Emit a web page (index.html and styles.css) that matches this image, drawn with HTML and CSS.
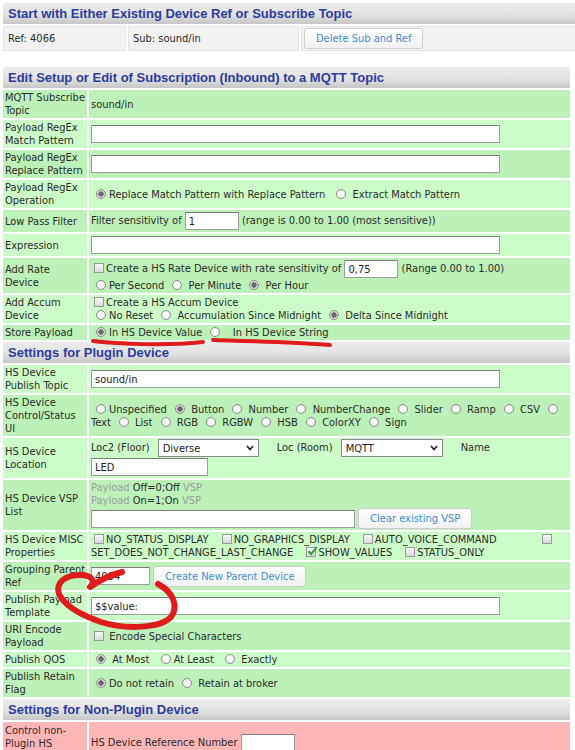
FILE: index.html
```html
<!DOCTYPE html>
<html>
<head>
<meta charset="utf-8">
<title>MQTT Device</title>
<link rel="stylesheet" href="styles.css">
</head>
<body>
<div class="page">
  <table class="top">
    <colgroup><col class="tc1"><col class="tc2"><col></colgroup>
    <tr><th colspan="3" class="hdr">Start with Either Existing Device Ref or Subscribe Topic</th></tr>
    <tr class="grey">
      <td>Ref: 4066</td>
      <td>Sub: sound/in</td>
      <td><span class="btn">Delete Sub and Ref</span></td>
    </tr>
  </table>

  <table class="form">
    <colgroup><col class="lab"><col></colgroup>
    <tr><th colspan="2" class="hdr">Edit Setup or Edit of Subscription (Inbound) to a MQTT Topic</th></tr>
    <tr class="d"><td class="lbl">MQTT Subscribe<br>Topic</td><td>sound/in</td></tr>
    <tr class="l"><td class="lbl">Payload RegEx<br>Match Pattern</td><td><input class="txt wfull" type="text" value=""></td></tr>
    <tr class="d"><td class="lbl">Payload RegEx<br>Replace Pattern</td><td><input class="txt wfull" type="text" value=""></td></tr>
    <tr class="l"><td class="lbl">Payload RegEx<br>Operation</td><td><span class="rb on"></span>Replace Match Pattern with Replace Pattern &nbsp;<span class="rb"></span> Extract Match Pattern</td></tr>
    <tr class="d"><td class="lbl">Low Pass Filter</td><td>Filter sensitivity of <input class="txt wsm" type="text" value="1"> (range is 0.00 to 1.00 (most sensitive))</td></tr>
    <tr class="l"><td class="lbl">Expression</td><td><input class="txt wfull" type="text" value=""></td></tr>
    <tr class="d"><td class="lbl">Add Rate<br>Device</td><td>
      <div><span class="cb"></span>Create a HS Rate Device with rate sensitivity of <input class="txt wsm" type="text" value="0,75"> (Range 0.00 to 1.00)</div>
      <div><span class="rb"></span>Per Second <span class="rb"></span> Per Minute <span class="rb on"></span> Per Hour</div>
    </td></tr>
    <tr class="l"><td class="lbl">Add Accum<br>Device</td><td>
      <div><span class="cb"></span>Create a HS Accum Device</div>
      <div><span class="rb"></span>No Reset <span class="rb"></span> Accumulation Since Midnight <span class="rb on"></span> Delta Since Midnight</div>
    </td></tr>
    <tr class="d"><td class="lbl">Store Payload</td><td><span class="rb on"></span>In HS Device Value <span class="rb"></span> &nbsp; In HS Device String</td></tr>

    <tr><th colspan="2" class="hdr">Settings for Plugin Device</th></tr>
    <tr class="l"><td class="lbl">HS Device<br>Publish Topic</td><td><input class="txt wfull" type="text" value="sound/in"></td></tr>
    <tr class="d"><td class="lbl">HS Device<br>Control/Status<br>UI</td><td>
      <div><span class="rb"></span>Unspecified <span class="rb on"></span> Button <span class="rb"></span> Number <span class="rb"></span> NumberChange <span class="rb"></span> Slider <span class="rb"></span> Ramp <span class="rb"></span> CSV <span class="rb"></span></div>
      <div>Text <span class="rb"></span> List <span class="rb"></span> RGB <span class="rb"></span> RGBW <span class="rb"></span> HSB <span class="rb"></span> ColorXY <span class="rb"></span> Sign</div>
    </td></tr>
    <tr class="l"><td class="lbl">HS Device<br>Location</td><td>
      <div class="locline">Loc2 (Floor) <span class="sel w101">Diverse<svg class="chev" width="8" height="6" viewBox="0 0 8 6"><polyline points="1,1 4,4.5 7,1" fill="none" stroke="#222" stroke-width="1.7"/></svg></span>Loc (Room) <span class="sel w102">MQTT<svg class="chev" width="8" height="6" viewBox="0 0 8 6"><polyline points="1,1 4,4.5 7,1" fill="none" stroke="#222" stroke-width="1.7"/></svg></span>Name</div>
      <div><input class="txt wled" type="text" value="LED"></div>
    </td></tr>
    <tr class="d"><td class="lbl">HS Device VSP<br>List</td><td>
      <div><span class="mute">Payload</span> Off=0;Off <span class="mute">VSP</span></div>
      <div><span class="mute">Payload</span> On=1;On <span class="mute">VSP</span></div>
      <div class="vspin"><input class="txt wvsp" type="text" value=""> <span class="btn">Clear existing VSP</span></div>
    </td></tr>
    <tr class="l"><td class="lbl">HS Device MISC<br>Properties</td><td>
      <div><span class="cb"></span>NO_STATUS_DISPLAY <span class="cb gap"></span>NO_GRAPHICS_DISPLAY <span class="cb gap"></span>AUTO_VOICE_COMMAND <span class="cb far"></span></div>
      <div>SET_DOES_NOT_CHANGE_LAST_CHANGE <span class="cb on gap"><svg width="11" height="10" viewBox="0 0 11 10"><path d="M1.5 5.2 L4.2 8 L9.8 1" fill="none" stroke="#2f9d2f" stroke-width="2"/></svg></span>SHOW_VALUES <span class="cb gap"></span>STATUS_ONLY</div>
    </td></tr>
    <tr class="d"><td class="lbl">Grouping Parent<br>Ref</td><td><input class="txt wgp" type="text" value="4064"> <span class="btn">Create New Parent Device</span></td></tr>
    <tr class="l"><td class="lbl">Publish Payload<br>Template</td><td><input class="txt wfull" type="text" value="$$value:"></td></tr>
    <tr class="d"><td class="lbl">URI Encode<br>Payload</td><td><span class="cb"></span> Encode Special Characters</td></tr>
    <tr class="l"><td class="lbl">Publish QOS</td><td><span class="rb on"></span> At Most &nbsp;<span class="rb"></span>At Least &nbsp;<span class="rb"></span> Exactly</td></tr>
    <tr class="d"><td class="lbl">Publish Retain<br>Flag</td><td><span class="rb on"></span>Do not retain <span class="rb"></span> Retain at broker</td></tr>

    <tr><th colspan="2" class="hdr">Settings for Non-Plugin Device</th></tr>
    <tr class="pink"><td class="lbl">Control non-<br>Plugin HS</td><td>HS Device Reference Number <input class="txt wref" type="text" value=""></td></tr>
  </table>
</div>

<svg class="ink" width="575" height="750" viewBox="0 0 575 750">
  <path d="M93 341 C 120 344, 165 346, 203 342" fill="none" stroke="#e01b1b" stroke-width="4" stroke-linecap="round"/>
  <path d="M213 340 C 245 341, 290 342, 330 345" fill="none" stroke="#e01b1b" stroke-width="4" stroke-linecap="round"/>
  <path d="M158 584 C 173 592, 179 606, 171 617 C 161 628, 126 630, 101 622 C 81 615, 64 605, 59 594 C 55 582, 66 575, 80 575 C 92 575, 96 581, 90 587 C 100 580, 110 575, 122 572" fill="none" stroke="#e01b1b" stroke-width="6" stroke-linecap="round" stroke-linejoin="round"/>
</svg>
</body>
</html>
```

FILE: styles.css
```css
html, body {
  margin: 0;
  padding: 0;
  background: #ffffff;
}
body {
  position: relative;
  width: 575px;
  height: 750px;
  overflow: hidden;
  font-family: "DejaVu Sans Condensed", "DejaVu Sans", sans-serif;
  font-stretch: condensed;
  font-size: 11px;
  line-height: 13px;
  color: #2a2a2a;
}
.page {
  padding: 1px 0 0 1px;
}
table {
  border-collapse: separate;
  border-spacing: 2px;
  table-layout: fixed;
}
.hdr {
  height: 21px;
  padding: 0 5px;
  text-align: left;
  white-space: nowrap;
  font-family: "Liberation Sans", Arial, sans-serif;
  font-weight: bold;
  font-size: 13px;
  line-height: 21px;
  font-stretch: normal;
  color: #2a3c9c;
  background: linear-gradient(to bottom, #ececec 0%, #e4e4e4 50%, #d6d6d6 75%, #c6c6c6 100%);
}

/* top table */
.top {
  width: 600px;
  margin-bottom: 12px;
}
.tc1 { width: 123px; }
.tc2 { width: 171px; }
.grey td {
  height: 23px;
  padding: 0 4px;
  background: #f2f2f2;
  border: 1px solid #e4e4e4;
  vertical-align: middle;
}
.grey td:last-child { padding-left: 2px; }

.btn {
  display: inline-block;
  height: 19px;
  padding: 0 11px;
  line-height: 19px;
  border: 1px solid #cdcdcd;
  border-radius: 3px;
  background: linear-gradient(to bottom, #ffffff 0%, #f1f1f1 100%);
  color: #3a8fd3;
  vertical-align: middle;
  white-space: nowrap;
}

/* form table */
.form {
  width: 571px;
}
.lab { width: 84px; }
.form td {
  padding: 1px 2px;
  vertical-align: middle;
}
.form td.lbl {
  white-space: nowrap;
  padding-left: 2px;
}
tr.d td { background: #bcf2b7; }
tr.l td { background: #ccfdc8; }
tr.pink td {
  background: #ffb6b6;
  height: 40px;
}
tr.pink td.lbl {
  vertical-align: top;
  padding-top: 2px;
}
tr.pink td:last-child {
  vertical-align: top;
  padding-top: 11px;
}

.txt {
  box-sizing: border-box;
  height: 18px;
  margin: 1px 0;
  padding: 0 3px;
  border: 1px solid #9c9c9c;
  border-top-color: #7e7e7e;
  background: #ffffff;
  font-family: inherit;
  font-stretch: condensed;
  font-size: 11px;
  color: #222;
  vertical-align: middle;
}
.wfull { width: 409px; }
.wsm { width: 54px; }
.wled { width: 117px; }
.wvsp { width: 264px; }
.wgp { width: 59px; }
.wref { width: 54px; }

.rb {
  display: inline-block;
  box-sizing: border-box;
  width: 10px;
  height: 10px;
  margin: 0 3px 0 5px;
  border: 1px solid #8b8b8b;
  border-radius: 50%;
  background: radial-gradient(circle, #ffffff 0, #ececec 100%);
  vertical-align: -1px;
}
.rb.on {
  background: radial-gradient(circle, #6a6a6a 0, #6a6a6a 2.4px, #d9d9d9 3px, #efefef 100%);
}
.cb {
  display: inline-block;
  box-sizing: border-box;
  width: 10px;
  height: 10px;
  margin: 0 2px 0 3px;
  border: 1px solid #9a9a9a;
  background: linear-gradient(to bottom, #f6f6f6, #dadada);
  vertical-align: -1px;
  position: relative;
}
.cb.gap { margin-left: 10px; }
.cb.far { margin-left: 42px; }
.cb svg {
  position: absolute;
  left: 0;
  top: -2px;
}

.sel {
  display: inline-flex;
  align-items: center;
  justify-content: space-between;
  box-sizing: border-box;
  height: 18px;
  margin: 0 18px 0 5px;
  padding: 0 4px 0 4px;
  border: 1px solid #8a8a8a;
  background: #ffffff;
  color: #222;
  vertical-align: middle;
}
.w101 { width: 101px; }
.w102 { width: 102px; }
.chev { flex: none; }
.locline { white-space: nowrap; }

.mute { color: #9a9a9a; }
.vspin { margin-top: 1px; }

.ink {
  position: absolute;
  left: 0;
  top: 0;
  pointer-events: none;
}
```
